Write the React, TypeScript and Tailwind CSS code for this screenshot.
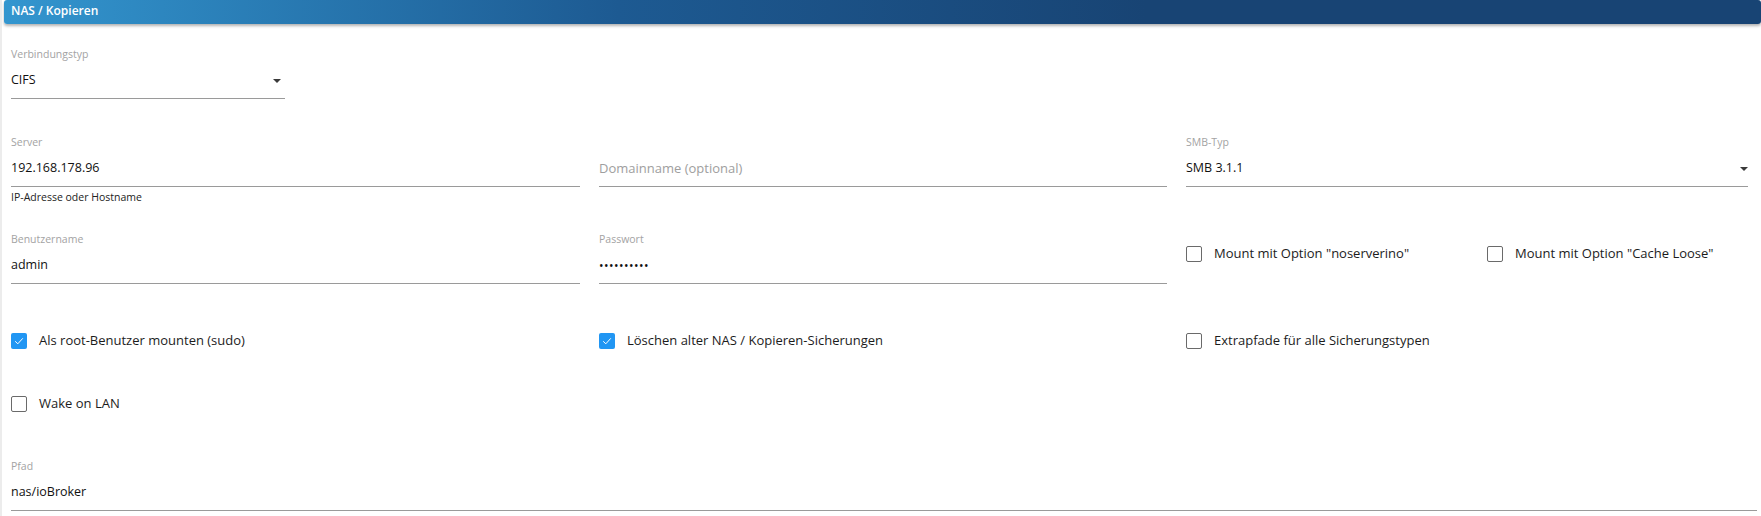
import React from "react";

const font = { fontFamily: '"Open Sans", "Noto Sans", sans-serif' };

function Caret() {
  return (
    <svg width="8" height="4" viewBox="0 0 8 4" className="shrink-0">
      <path d="M0 0h8L4 4z" fill="#3a3a3a" />
    </svg>
  );
}

function Field({
  label,
  value,
  placeholder,
  select,
  password,
  caretGap = "mr-[4px]",
}: {
  label?: string;
  value?: string;
  placeholder?: string;
  select?: boolean;
  password?: boolean;
  caretGap?: string;
}) {
  return (
    <div>
      <div className="h-[14px] leading-[14px] text-[10.5px] text-[#a3a3a3]">{label}</div>
      <div className="h-[38px] flex items-center justify-between border-b border-[#9a9a9a] pt-[2px]">
        {value ? (
          <span className={password ? "text-[12px] tracking-[0.5px] text-[#111]" : "text-[12.5px] text-[#111]"}>
            {value}
          </span>
        ) : (
          <span className="text-[13px] text-[#9e9e9e]">{placeholder}</span>
        )}
        {select && (
          <span className={caretGap}>
            <Caret />
          </span>
        )}
      </div>
    </div>
  );
}

function Check({ label, checked }: { label: string; checked?: boolean }) {
  return (
    <div className="flex items-center h-8">
      {checked ? (
        <span className="w-4 h-4 rounded-[2px] bg-[#2196f3] flex items-center justify-center shrink-0">
          <svg width="10" height="8" viewBox="0 0 10 8">
            <path d="M1.2 4.3L3.8 6.8L8.8 1.3" stroke="white" strokeWidth="1" fill="none" />
          </svg>
        </span>
      ) : (
        <span className="w-4 h-4 rounded-[2px] border-[1.5px] border-[#6a6a6a] shrink-0" />
      )}
      <span className="ml-3 text-[13px] text-[#1c1c1c] whitespace-nowrap">{label}</span>
    </div>
  );
}

export default function App() {
  const cols = "grid grid-cols-[569px_568px_1fr] gap-x-[19px]";
  return (
    <div className="w-full h-[516px] bg-white border-l-2 border-[#ececec] overflow-hidden" style={font}>
      <div className="ml-[2px] h-[24px] rounded-[3px] bg-gradient-to-r from-[#3396cf] via-[#1d5a92] via-35% to-[#184474] to-65% shadow-[0_2px_3px_rgba(0,0,0,0.3)] pl-[7px]">
        <span className="block text-[12px] font-semibold text-white leading-[21px]">NAS / Kopieren</span>
      </div>

      <div className="pl-[9px] pr-[13px]">
        <div className="mt-[23px] w-[274px]">
          <Field label="Verbindungstyp" value="CIFS" select />
        </div>

        <div className={`${cols} mt-[36px]`}>
          <div>
            <Field label="Server" value="192.168.178.96" />
            <div className="mt-[3px] h-[14px] leading-[14px] text-[10.5px] text-[#222]">IP-Adresse oder Hostname</div>
          </div>
          <Field placeholder="Domainname (optional)" />
          <Field label="SMB-Typ" value="SMB 3.1.1" select caretGap="mr-0" />
        </div>

        <div className={`${cols} mt-[28px]`}>
          <Field label="Benutzername" value="admin" />
          <Field label="Passwort" value="••••••••••" password />
          <div className="grid grid-cols-[301px_1fr] pt-[6px]">
            <Check label={'Mount mit Option "noserverino"'} />
            <Check label={'Mount mit Option "Cache Loose"'} />
          </div>
        </div>

        <div className={`${cols} mt-[41px]`}>
          <Check label="Als root-Benutzer mounten (sudo)" checked />
          <Check label="Löschen alter NAS / Kopieren-Sicherungen" checked />
          <Check label="Extrapfade für alle Sicherungstypen" />
        </div>

        <div className="mt-[31px]">
          <Check label="Wake on LAN" />
        </div>

        <div className="mt-[39px] mr-[-9px]">
          <Field label="Pfad" value="nas/ioBroker" />
        </div>
      </div>
    </div>
  );
}
